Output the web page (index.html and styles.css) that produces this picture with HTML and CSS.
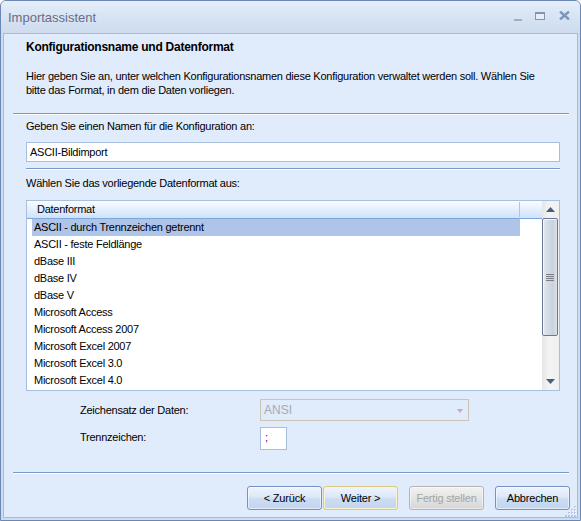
FILE: index.html
```html
<!DOCTYPE html>
<html lang="de">
<head>
<meta charset="utf-8">
<title>Importassistent</title>
<link rel="stylesheet" href="styles.css">
</head>
<body>
<div class="window">
  <div class="titlebar">
    <span class="title">Importassistent</span>
    <div class="caption-btns">
      <span class="cap cap-min"></span>
      <span class="cap cap-max"></span>
      <svg class="cap-close" width="11" height="9" viewBox="0 0 11 9"><path d="M1 0.5 L10 8.5 M10 0.5 L1 8.5" stroke="#7f96bb" stroke-width="2.4" fill="none"/></svg>
    </div>
  </div>
  <div class="client">
    <div class="header">
      <div class="heading">Konfigurationsname und Datenformat</div>
      <p class="desc">Hier geben Sie an, unter welchen Konfigurationsnamen diese Konfiguration verwaltet werden soll. Wählen Sie bitte das Format, in dem die Daten vorliegen.</p>
    </div>
    <div class="sep wide"></div>
    <div class="body">
      <div class="label">Geben Sie einen Namen für die Konfiguration an:</div>
      <div class="textbox">ASCII-Bildimport</div>
      <div class="sep inner"></div>
      <div class="label">Wählen Sie das vorliegende Datenformat aus:</div>
      <div class="listbox">
        <div class="listmain">
          <div class="listhead"><span class="colhead">Datenformat</span><span class="colrest"></span></div>
          <div class="rows">
            <div class="row selected">ASCII - durch Trennzeichen getrennt</div>
            <div class="row">ASCII - feste Feldlänge</div>
            <div class="row">dBase III</div>
            <div class="row">dBase IV</div>
            <div class="row">dBase V</div>
            <div class="row">Microsoft Access</div>
            <div class="row">Microsoft Access 2007</div>
            <div class="row">Microsoft Excel 2007</div>
            <div class="row">Microsoft Excel 3.0</div>
            <div class="row">Microsoft Excel 4.0</div>
          </div>
        </div>
        <div class="scrollbar">
          <div class="arrow"><svg width="9" height="5" viewBox="0 0 9 5"><path d="M0 5 L4.5 0 L9 5 Z" fill="#4a5c80"/></svg></div>
          <div class="thumb"><span class="grip"></span></div>
          <div class="track"></div>
          <div class="arrow"><svg width="9" height="5" viewBox="0 0 9 5"><path d="M0 0 L9 0 L4.5 5 Z" fill="#4a5c80"/></svg></div>
        </div>
      </div>
      <div class="options">
        <div class="opt-row">
          <span class="opt-label">Zeichensatz der Daten:</span>
          <div class="combo"><span>ANSI</span><svg width="6" height="4" viewBox="0 0 6 4"><path d="M0 0 L6 0 L3 4 Z" fill="#c8a6cb"/></svg></div>
        </div>
        <div class="opt-row">
          <span class="opt-label lbl-top">Trennzeichen:</span>
          <div class="smallbox">;</div>
        </div>
      </div>
    </div>
    <div class="sep wide bottom-sep"></div>
    <div class="buttons">
      <div class="pair">
        <button class="btn">&lt; Zurück</button>
        <button class="btn default">Weiter &gt;</button>
      </div>
      <button class="btn disabled">Fertig stellen</button>
      <button class="btn">Abbrechen</button>
    </div>
    <svg class="grip-corner" width="13" height="13" viewBox="0 0 13 13">
      <g fill="#b4c7e4">
        <rect x="10" y="2" width="2" height="2"/>
        <rect x="7" y="5" width="2" height="2"/><rect x="10" y="5" width="2" height="2"/>
        <rect x="4" y="8" width="2" height="2"/><rect x="7" y="8" width="2" height="2"/><rect x="10" y="8" width="2" height="2"/>
        <rect x="1" y="11" width="2" height="2"/><rect x="4" y="11" width="2" height="2"/><rect x="7" y="11" width="2" height="2"/><rect x="10" y="11" width="2" height="2"/>
      </g>
      <g fill="#ffffff">
        <rect x="11" y="3" width="1" height="1"/>
        <rect x="8" y="6" width="1" height="1"/><rect x="11" y="6" width="1" height="1"/>
        <rect x="5" y="9" width="1" height="1"/><rect x="8" y="9" width="1" height="1"/><rect x="11" y="9" width="1" height="1"/>
      </g>
    </svg>
  </div>
</div>
</body>
</html>
```

FILE: styles.css
```css
html, body {
  margin: 0;
  padding: 0;
  background: #ffffff;
}
body {
  font-family: "Liberation Sans", Arial, sans-serif;
  font-size: 11px;
  letter-spacing: -0.25px;
  color: #000;
}
.window {
  width: 581px;
  height: 521px;
  box-sizing: border-box;
  border: 1px solid #6a87b6;
  border-radius: 6px 6px 0 0;
  background: #cddcef;
  display: flex;
  flex-direction: column;
  overflow: hidden;
}
.titlebar {
  height: 32px;
  flex: none;
  display: flex;
  align-items: center;
  justify-content: space-between;
  background: linear-gradient(#e6eef9, #d5e2f3 60%, #cfdcef);
  padding: 0 10px 0 7px;
}
.title {
  font-size: 13px;
  letter-spacing: 0;
  color: #6b6c88;
  margin-top: 1px;
}
.caption-btns {
  display: flex;
  align-items: center;
  gap: 13px;
  margin-top: -3px;
}
.cap { display: block; }
.cap-min {
  width: 8px;
  height: 2px;
  background: #a5aebd;
  margin-top: 9px;
}
.cap-max {
  width: 8px;
  height: 5px;
  border: 1px solid #8594b0;
  border-top-width: 2px;
  background: #e8eef7;
}
.cap-close { display: block; margin-left: 1px; }
.client {
  flex: 1;
  margin: 0 2px 2px 2px;
  border: 1px solid #a4bbdd;
  background: #e0ebfb;
  position: relative;
  display: flex;
  flex-direction: column;
}
.header {
  padding: 6px 20px 0 22px;
}
.heading {
  font-weight: bold;
  font-size: 12px;
  line-height: 14px;
}
.desc {
  margin: 15px 0 0 0;
  line-height: 14px;
  max-width: 522px;
}
.sep {
  height: 1px;
  background: #7899cb;
  border-bottom: 1px solid #ffffff;
  flex: none;
}
.sep.wide {
  margin: 16px 8px 0 9px;
}
.body {
  padding: 0 17px 0 22px;
}
.label {
  line-height: 14px;
  margin-top: 4px;
}
.textbox {
  margin-top: 9px;
  height: 18px;
  border: 1px solid #a8bfe0;
  background: #ffffff;
  line-height: 18px;
  padding-left: 3px;
}
.sep.inner {
  margin-top: 6px;
  margin-bottom: 6px;
}
.listbox {
  margin-top: 10px;
  height: 189px;
  border: 1px solid #a8bfe0;
  background: #ffffff;
  display: flex;
}
.listmain {
  flex: 1;
  display: flex;
  flex-direction: column;
}
.listhead {
  height: 17px;
  border-bottom: 1px solid #7fa6dc;
  background: linear-gradient(#fbfdff, #e4efff 50%, #cfe2fb);
  display: flex;
  line-height: 17px;
}
.colhead {
  width: 482px;
  flex: none;
  padding-left: 10px;
  border-right: 1px solid #a9c6ee;
  height: 15px;
  margin-top: 1px;
  line-height: 15px;
}
.colrest { flex: 1; }
.rows {
  padding-left: 5px;
}
.row {
  height: 17px;
  line-height: 17px;
  padding-left: 2px;
  width: 486px;
}
.row.selected {
  background: #afc4e9;
}
.scrollbar {
  width: 17px;
  flex: none;
  display: flex;
  flex-direction: column;
  background: linear-gradient(90deg, #e6e6e6, #f3f3f3 40%, #f0f0f0);
}
.arrow {
  height: 17px;
  display: flex;
  align-items: center;
  justify-content: center;
  flex: none;
}
.arrow svg { display: block; }
.thumb {
  height: 116px;
  margin: 0 1px 0 0;
  border: 1px solid #69789a;
  border-radius: 2px;
  background: linear-gradient(90deg, #e5eaf1, #d6dde8 30%, #c9d2e0 70%, #dbe1ea);
  box-shadow: inset 1px 1px 0 #f4f6fa;
  display: flex;
  align-items: center;
  justify-content: center;
  flex: none;
}
.grip {
  display: block;
  width: 8px;
  height: 7px;
  background: repeating-linear-gradient(#7b7d82 0 1px, transparent 1px 2px);
}
.track { flex: 1; }
.options {
  padding-left: 54px;
  margin-top: 8px;
  display: flex;
  flex-direction: column;
  gap: 6px;
}
.opt-row {
  display: flex;
}
.opt-label {
  width: 180px;
  flex: none;
  line-height: 22px;
}
.opt-label.lbl-top {
  line-height: 20px;
}
.combo {
  box-sizing: border-box;
  flex: none;
  width: 209px;
  height: 22px;
  border: 1px solid #cac6b5;
  display: flex;
  align-items: center;
  justify-content: space-between;
  padding: 0 5px 0 3px;
  color: #a9a9b0;
  font-size: 12px;
  letter-spacing: 0;
}
.combo svg { display: block; margin-top: 1px; }
.smallbox {
  box-sizing: border-box;
  flex: none;
  width: 27px;
  height: 23px;
  border: 1px solid #a8bfe0;
  background: #fff;
  color: #6a006a;
  padding-left: 4px;
  line-height: 19px;
}
.bottom-sep {
  margin-top: auto !important;
}
.buttons {
  display: flex;
  justify-content: flex-end;
  gap: 11px;
  padding: 12px 7px 7px 0;
  flex: none;
}
.pair {
  display: flex;
  gap: 1px;
}
.btn {
  width: 75px;
  height: 24px;
  margin: 0;
  border: 1px solid #7592c3;
  border-radius: 3px;
  background: linear-gradient(#eef4fc, #dce8f8 45%, #cbdcf2 55%, #c3d6f0);
  font-family: "Liberation Sans", Arial, sans-serif;
  font-size: 11px;
  letter-spacing: -0.2px;
  color: #000;
  padding: 0;
  box-shadow: inset 0 0 0 1px rgba(255,255,255,0.5);
}
.btn.default {
  border-color: #dcc87e;
  box-shadow: inset 0 0 0 1px #fbf3cd;
}
.btn.disabled {
  border-color: #b4b4b4;
  background: linear-gradient(#f2f2f2, #e4e4e4 50%, #d6d6d6);
  color: #a4a4a4;
}
.grip-corner {
  position: absolute;
  right: 0;
  bottom: 0;
}
```
